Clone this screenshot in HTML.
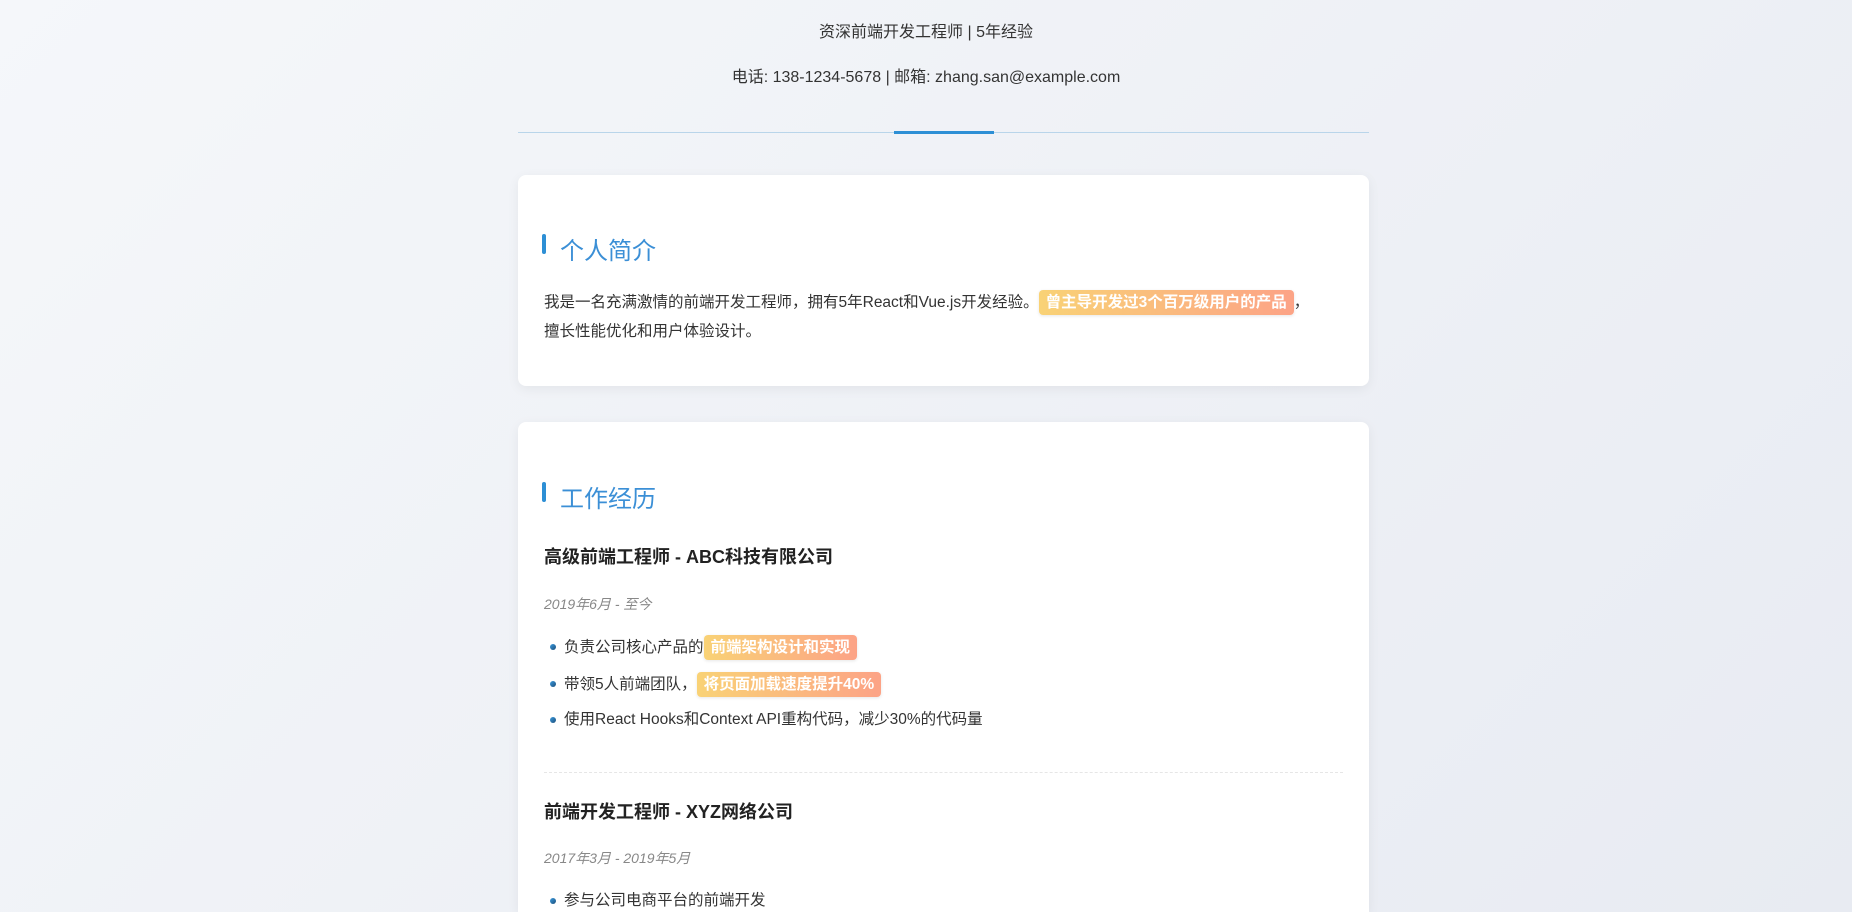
<!DOCTYPE html>
<html><head><meta charset="utf-8">
<style>
html,body{margin:0;padding:0;width:1852px;height:912px;overflow:hidden}
body{background:linear-gradient(135deg,#f5f7fa 0%,#e8ebf2 100%);font-family:"Liberation Sans","Noto Sans CJK SC",sans-serif;color:#333}
.wrap{position:relative;width:1852px;height:912px;overflow:hidden}
.t{position:absolute;left:0;width:1852px;text-align:center;font-size:16px;color:#333}
.line{position:absolute;left:518px;width:851px;top:132px;height:1px;background:#b9d5ea}
.seg{position:absolute;left:894px;width:100px;top:131px;height:3px;background:#2d8fd5}
.card{position:absolute;left:518px;width:851px;background:#fff;border-radius:8px;box-shadow:0 3px 12px rgba(0,0,0,0.06)}
.h{position:absolute;left:26px;font-size:24px;color:#3b8fd6;line-height:30px}
.h:before{content:"";position:absolute;left:-2px;top:-3px;width:4px;height:20px;border-radius:2px;background:#2d8fd5}
.h span{padding-left:16px}
.p{position:absolute;left:26px;width:810px;font-size:15.5px;line-height:29px;color:#333}
.hl{display:inline-block;background:linear-gradient(90deg,#f9d276,#fca386);color:#fff;font-weight:bold;border-radius:4px;padding:0 7px;line-height:25px;box-shadow:0 1px 3px rgba(0,0,0,0.1)}
.jt{position:absolute;left:26px;font-size:18px;font-weight:bold;color:#222}
.dt{position:absolute;left:26px;font-size:14px;font-style:italic;color:#888}
.li{position:absolute;left:46px;font-size:15.5px;color:#333;line-height:24px}
.li:before{content:"";position:absolute;left:-14px;top:9px;width:6px;height:6px;border-radius:50%;background:linear-gradient(135deg,#3a9be0,#1d4f7a)}
.dash{position:absolute;left:26px;width:799px;border-top:1px dashed #e6e6e6}
</style></head><body><div class="wrap">
<div class="t" style="top:18px">资深前端开发工程师 | 5年经验</div>
<div class="t" style="top:63px">电话: 138-1234-5678 | 邮箱: zhang.san@example.com</div>
<div class="line"></div><div class="seg"></div>

<div class="card" style="top:175px;height:211px">
  <div class="h" style="top:62px"><span>个人简介</span></div>
  <div class="p" style="top:113px">我是一名充满激情的前端开发工程师，拥有5年React和Vue.js开发经验。<span class="hl">曾主导开发过3个百万级用户的产品</span>，<br>擅长性能优化和用户体验设计。</div>
</div>

<div class="card" style="top:422px;height:490px;border-bottom-left-radius:0;border-bottom-right-radius:0">
  <div class="h" style="top:63px"><span>工作经历</span></div>
  <div class="jt" style="top:121px">高级前端工程师 - ABC科技有限公司</div>
  <div class="dt" style="top:172px">2019年6月 - 至今</div>
  <div class="li" style="top:213px">负责公司核心产品的<span class="hl">前端架构设计和实现</span></div>
  <div class="li" style="top:250px">带领5人前端团队，<span class="hl">将页面加载速度提升40%</span></div>
  <div class="li" style="top:286px">使用React Hooks和Context API重构代码，减少30%的代码量</div>
  <div class="dash" style="top:350px"></div>
  <div class="jt" style="top:376px">前端开发工程师 - XYZ网络公司</div>
  <div class="dt" style="top:426px">2017年3月 - 2019年5月</div>
  <div class="li" style="top:467px">参与公司电商平台的前端开发</div>
</div>
</div></body></html>
